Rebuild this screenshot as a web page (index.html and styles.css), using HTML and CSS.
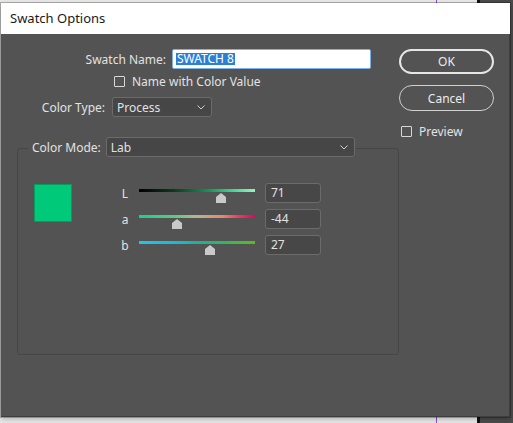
FILE: index.html
```html
<!DOCTYPE html>
<html>
<head>
<meta charset="utf-8">
<link rel="stylesheet" href="styles.css">
</head>
<body>
<div class="desktop">
  <div class="guide-purple"></div>
  <div class="guide-black"></div>
  <div class="desk-dark"></div>

  <div class="dialog">
    <div class="titlebar">Swatch Options</div>
    <div class="dbody">
      <div class="main">
        <div class="row row-name">
          <label class="lbl lbl-name">Swatch Name:</label>
          <div class="name-input"><span class="sel">SWATCH 8</span></div>
        </div>
        <div class="row row-check">
          <span class="check"></span>
          <span class="txt">Name with Color Value</span>
        </div>
        <div class="row row-type">
          <label class="lbl lbl-type">Color Type:</label>
          <div class="select sel-type"><span>Process</span>
            <svg class="chev" width="8" height="5" viewBox="0 0 8 5"><polyline points="0.5,0.5 4,4 7.5,0.5" fill="none" stroke="#cfcfcf" stroke-width="1"/></svg>
          </div>
        </div>

        <div class="group">
          <div class="legend">
            <span class="legend-lbl">Color Mode:</span>
            <div class="select sel-mode"><span>Lab</span>
              <svg class="chev" width="8" height="5" viewBox="0 0 8 5"><polyline points="0.5,0.5 4,4 7.5,0.5" fill="none" stroke="#cfcfcf" stroke-width="1"/></svg>
            </div>
          </div>
          <div class="mixer">
            <div class="swatch"></div>
            <div class="sliders">
              <div class="srow">
                <span class="slbl">L</span>
                <div class="slider">
                  <div class="track track-l"></div>
                  <svg class="thumb" style="left: calc(71% - 5px)" width="10" height="10" viewBox="0 0 10 10"><polygon points="5,0 10,4 10,10 0,10 0,4" fill="#c9c9c9"/></svg>
                </div>
                <div class="num">71</div>
              </div>
              <div class="srow">
                <span class="slbl">a</span>
                <div class="slider">
                  <div class="track track-a"></div>
                  <svg class="thumb" style="left: calc(33% - 5px)" width="10" height="10" viewBox="0 0 10 10"><polygon points="5,0 10,4 10,10 0,10 0,4" fill="#c9c9c9"/></svg>
                </div>
                <div class="num">-44</div>
              </div>
              <div class="srow">
                <span class="slbl">b</span>
                <div class="slider">
                  <div class="track track-b"></div>
                  <svg class="thumb" style="left: calc(61% - 5px)" width="10" height="10" viewBox="0 0 10 10"><polygon points="5,0 10,4 10,10 0,10 0,4" fill="#c9c9c9"/></svg>
                </div>
                <div class="num">27</div>
              </div>
            </div>
          </div>
        </div>
      </div>

      <div class="side">
        <div class="btn btn-ok">OK</div>
        <div class="btn btn-cancel">Cancel</div>
        <div class="row row-preview">
          <span class="check"></span>
          <span class="txt">Preview</span>
        </div>
      </div>
    </div>
  </div>
</div>
</body>
</html>
```

FILE: styles.css
```css
* { box-sizing: border-box; }

html, body {
  margin: 0;
  padding: 0;
}

body {
  width: 513px;
  height: 423px;
  overflow: hidden;
  background: #e9e9e9;
  font-family: "Noto Sans", "Open Sans", sans-serif;
  font-size: 12px;
  color: #e2e2e2;
}

.desktop {
  position: relative;
  width: 513px;
  height: 423px;
}

.guide-purple {
  position: absolute;
  left: 436px;
  top: 0;
  width: 1px;
  height: 423px;
  background: #8a4fd0;
}

.guide-black {
  position: absolute;
  left: 477px;
  top: 0;
  width: 3px;
  height: 423px;
  background: #111;
}

.desk-dark {
  position: absolute;
  left: 480px;
  top: 0;
  width: 33px;
  height: 423px;
  background: #4b4b4b;
}

.dialog {
  position: absolute;
  left: 1px;
  top: 3px;
  width: 509px;
  height: 414px;
  display: flex;
  flex-direction: column;
  box-shadow: 0 0 0 1px rgba(0,0,0,0.25), 0 2px 6px rgba(0,0,0,0.25);
}

.titlebar {
  height: 31px;
  flex: none;
  background: #ffffff;
  color: #1a1a1a;
  font-size: 13px;
  line-height: 31px;
  padding-left: 9px;
}

.dbody {
  flex: 1;
  background: #535353;
  display: flex;
  border-right: 1px solid #3e3e3e;
  border-bottom: 1px solid #3e3e3e;
}

.main {
  width: 398px;
  flex: none;
  padding-top: 15px;
}

.row {
  display: flex;
  align-items: center;
}

.row-name {
  height: 20px;
}

.lbl {
  text-align: right;
  flex: none;
}

.lbl-name {
  width: 165px;
  margin-right: 6px;
}

.name-input {
  width: 199px;
  height: 20px;
  background: #ffffff;
  border: 1px solid #7fb0e6;
  border-radius: 2px;
  display: flex;
  align-items: center;
  padding-left: 3px;
}

.sel {
  background: #2d7fd6;
  color: #ffffff;
  line-height: 12px;
  height: 12px;
  padding: 0 1px;
  font-size: 12px;
}

.row-check {
  margin-top: 7px;
  height: 11px;
  padding-left: 113px;
}

.check {
  width: 11px;
  height: 11px;
  flex: none;
  border: 1px solid #d8d8d8;
  border-radius: 1px;
}

.txt {
  margin-left: 7px;
  line-height: 11px;
}

.row-type {
  margin-top: 10px;
  height: 20px;
}

.lbl-type {
  width: 104px;
  margin-right: 7px;
}

.select {
  height: 20px;
  background: #464646;
  border: 1px solid #6b6b6b;
  border-radius: 3px;
  display: flex;
  align-items: center;
  justify-content: space-between;
  padding: 0 6px 0 4px;
}

.sel-type {
  width: 100px;
}

.group {
  margin-top: 31px;
  margin-left: 16px;
  width: 382px;
  height: 207px;
  border: 1px solid #464646;
  border-radius: 3px;
}

.legend {
  margin-top: -12px;
  margin-left: 10px;
  display: flex;
  align-items: center;
  height: 20px;
  width: 327px;
}

.legend-lbl {
  background: #535353;
  padding: 0 4px;
  margin-right: 1px;
}

.sel-mode {
  flex: 1;
}

.mixer {
  display: flex;
  align-items: flex-start;
  margin-top: 26px;
  padding-left: 16px;
}

.swatch {
  width: 38px;
  height: 38px;
  margin-top: 1px;
  background: #00c97a;
  border: 1px solid #0a9a60;
  flex: none;
}

.sliders {
  margin-left: 46px;
  display: flex;
  flex-direction: column;
  gap: 6px;
}

.srow {
  display: flex;
  height: 20px;
  align-items: flex-start;
}

.slbl {
  width: 14px;
  text-align: center;
  line-height: 22px;
  margin-right: 7px;
}

.slider {
  position: relative;
  width: 116px;
  height: 20px;
}

.track {
  margin-top: 6px;
  height: 3px;
}

.track-l {
  background: linear-gradient(to right, #000000 0%, #0c3a1e 30%, #12955a 60%, #3fd48d 80%, #8ff5c2 100%);
}

.track-a {
  background: linear-gradient(to right, #17d286 0%, #5ac98a 30%, #b8b48a 50%, #e4886e 72%, #ea3f64 85%, #e8005a 100%);
}

.track-b {
  background: linear-gradient(to right, #1ec6ef 0%, #1cb8c8 35%, #1fb09a 50%, #38b45a 75%, #5cbc1e 100%);
}

.thumb {
  position: absolute;
  top: 10px;
}

.num {
  margin-left: 10px;
  width: 56px;
  height: 20px;
  background: #474747;
  border: 1px solid #6b6b6b;
  border-radius: 3px;
  padding-left: 5px;
  line-height: 18px;
}

.side {
  padding-top: 15px;
  display: flex;
  flex-direction: column;
  width: 96px;
}

.btn {
  width: 95px;
  border-radius: 13px;
  display: flex;
  align-items: center;
  justify-content: center;
  color: #ececec;
}

.btn-ok {
  height: 25px;
  border: 2px solid #e6e6e6;
}

.btn-cancel {
  margin-top: 11px;
  height: 26px;
  border: 1px solid #d0d0d0;
}

.row-preview {
  margin-top: 15px;
  height: 11px;
  padding-left: 2px;
}
```
